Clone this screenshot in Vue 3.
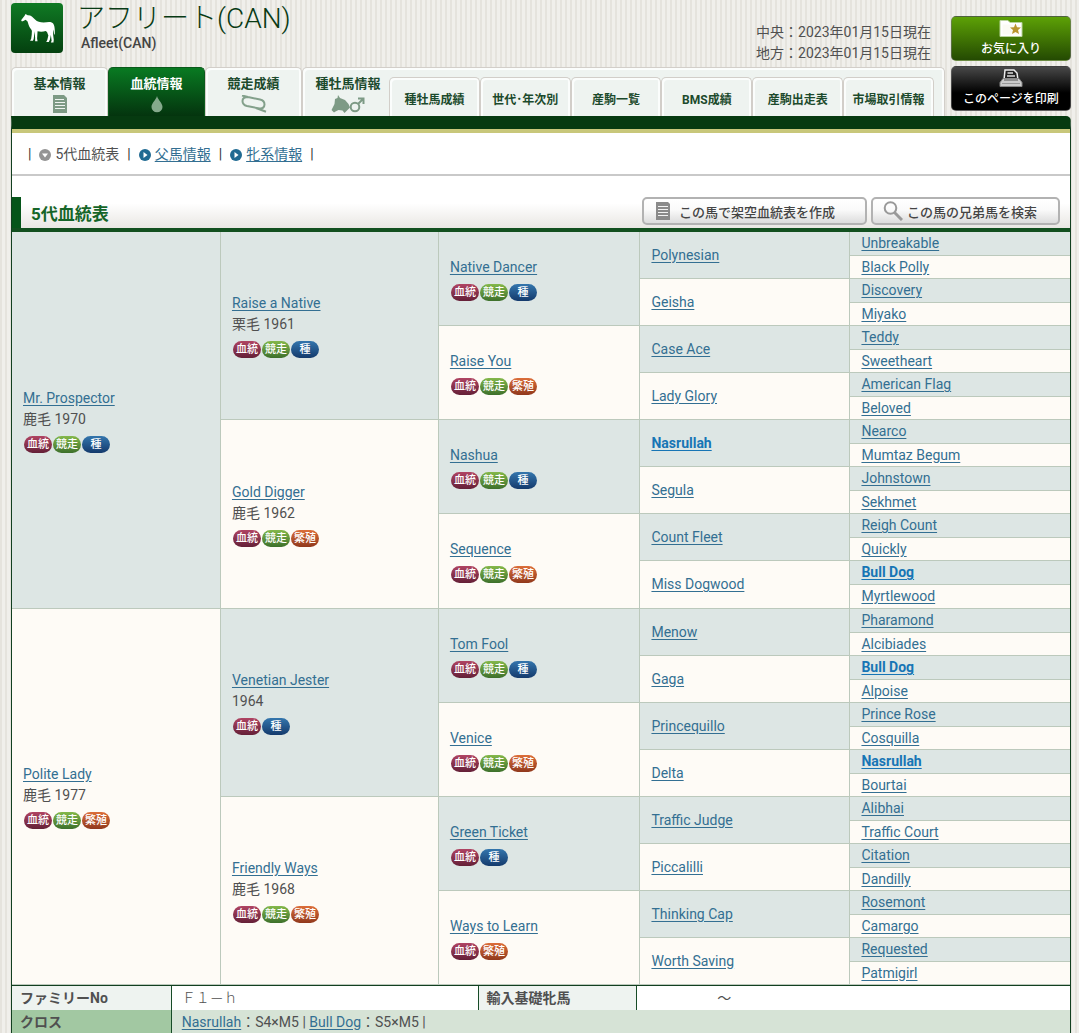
<script setup>
const mainTabs = [
  { label: '基本情報', icon: 'list' },
  { label: '血統情報', icon: 'drop', active: true },
  { label: '競走成績', icon: 'track' },
]
const subTabs = ['種牡馬成績', '世代･年次別', '産駒一覧', 'BMS成績', '産駒出走表', '市場取引情報']

const kinds = {
  b: { label: '血統', cls: 'blood' },
  r: { label: '競走', cls: 'race' },
  s: { label: '種', cls: 'stud' },
  m: { label: '繁殖', cls: 'mare' },
}

const generations = [
  [
    { name: 'Mr. Prospector', info: '鹿毛 1970', marks: 'brs' },
    { name: 'Polite Lady', info: '鹿毛 1977', marks: 'brm' },
  ],
  [
    { name: 'Raise a Native', info: '栗毛 1961', marks: 'brs' },
    { name: 'Gold Digger', info: '鹿毛 1962', marks: 'brm' },
    { name: 'Venetian Jester', info: '1964', marks: 'bs' },
    { name: 'Friendly Ways', info: '鹿毛 1968', marks: 'brm' },
  ],
  [
    { name: 'Native Dancer', marks: 'brs' },
    { name: 'Raise You', marks: 'brm' },
    { name: 'Nashua', marks: 'brs' },
    { name: 'Sequence', marks: 'brm' },
    { name: 'Tom Fool', marks: 'brs' },
    { name: 'Venice', marks: 'brm' },
    { name: 'Green Ticket', marks: 'bs' },
    { name: 'Ways to Learn', marks: 'bm' },
  ],
  [
    'Polynesian', 'Geisha', 'Case Ace', 'Lady Glory', 'Nasrullah', 'Segula', 'Count Fleet', 'Miss Dogwood',
    'Menow', 'Gaga', 'Princequillo', 'Delta', 'Traffic Judge', 'Piccalilli', 'Thinking Cap', 'Worth Saving',
  ].map((name) => ({ name })),
  [
    'Unbreakable', 'Black Polly', 'Discovery', 'Miyako', 'Teddy', 'Sweetheart', 'American Flag', 'Beloved',
    'Nearco', 'Mumtaz Begum', 'Johnstown', 'Sekhmet', 'Reigh Count', 'Quickly', 'Bull Dog', 'Myrtlewood',
    'Pharamond', 'Alcibiades', 'Bull Dog', 'Alpoise', 'Prince Rose', 'Cosquilla', 'Nasrullah', 'Bourtai',
    'Alibhai', 'Traffic Court', 'Citation', 'Dandilly', 'Rosemont', 'Camargo', 'Requested', 'Patmigirl',
  ].map((name) => ({ name })),
]
const crossed = ['Nasrullah', 'Bull Dog']

const rows = Array.from({ length: 32 }, (_, r) =>
  generations.flatMap((gen, g) => {
    const span = 32 / gen.length
    if (r % span) return []
    const i = r / span
    const horse = gen[i]
    return [{
      ...horse,
      span,
      key: g + '-' + i,
      sire: i % 2 === 0,
      cross: crossed.includes(horse.name),
      badges: [...(horse.marks || '')].map((m) => kinds[m]),
    }]
  })
)
</script>

<template>
  <div class="page">
    <header class="top">
      <div class="lead">
        <div class="title-row">
          <svg class="logo" viewBox="0 0 52 50" aria-hidden="true">
            <defs>
              <linearGradient id="logo-bg" x1="0" y1="0" x2="0" y2="1">
                <stop offset="0" stop-color="#107a24" />
                <stop offset="1" stop-color="#04400f" />
              </linearGradient>
            </defs>
            <rect width="52" height="50" rx="4" fill="url(#logo-bg)" />
            <path transform="translate(1 1.500) scale(.9)" fill="#fff" d="M15 10.500l-1 2-3.500 4.500c-.6 1.300.4 2 1.600 1.600l3-1.600 2 1.500c1 2 1.300 5 3 7.500 1 1.500 1.800 2 2 3.500l-.2 4-.6 4.500-1.200 2.300h3.200l.8-2 1-8.500.6 7 0 4h2.700l-.5-3 .5-8c3 .8 6.500.6 9-.3l1.500 1 1.500 4-1.200 5-1.200 2.300h2.900l1.300-3 1-5 .8 6.500-.9 2h3l.3-3-.8-6.500.2-5c.7 2 1 4.500.8 6.500l1-2c.2-6-.5-11.500-3.500-12.300-3-1-5.800 0-9 .1-4-.2-7-.7-9.500-3.300-2.500-2.500-4.500-5-8.200-4.800z" />
          </svg>
          <div class="names">
            <h1>アフリート(CAN)</h1>
            <p>Afleet(CAN)</p>
          </div>
          <div class="dates">
            <div>中央：2023年01月15日現在</div>
            <div>地方：2023年01月15日現在</div>
          </div>
        </div>

        <nav class="tabs">
          <a v-for="t in mainTabs" :key="t.label" href="#" class="tab main" :class="{ active: t.active }">
            <span>{{ t.label }}</span>
            <svg v-if="t.icon === 'list'" width="14" height="18" viewBox="0 0 14 18" aria-hidden="true">
              <path d="M0 0h11l3 3v15H0z" fill="#7d9a85" />
              <path d="M2 4.500h9M2 7.500h10M2 10.500h10M2 13.500h10" stroke="#eef3f0" stroke-width="1.200" />
            </svg>
            <svg v-else-if="t.icon === 'drop'" width="12" height="18" viewBox="0 0 12 18" aria-hidden="true">
              <path d="M6 1C5 5 .5 8 .5 12a5.500 5.200 0 0 0 11 0C11.500 8 7 5 6 1z" fill="#85aa8c" />
            </svg>
            <svg v-else width="26" height="18" viewBox="0 0 26 18" aria-hidden="true">
              <path d="M1 .5L7 2l12 2.500c3 .6 4.500 2.500 4.500 5s-2 4.500-5 4L6 11C3 10.300 1.500 8.500 1.500 6S3.500 2 7 2M15 13l10 3.800" fill="none" stroke="#83a08b" stroke-width="2" />
            </svg>
          </a>
          <div class="group">
            <a href="#" class="stallion">
              <span>種牡馬情報</span>
              <svg width="34" height="18" viewBox="0 0 34 18" aria-hidden="true">
                <path d="M7 0l2 3 5 2 3.500 4 1.500 3.500-5.500 5.500-2-2.500-4-.5-3 1.500L3 17.500.5 15l3-6 .5-5 2.500-1z" fill="#7d9a85" />
                <circle cx="24" cy="12" r="4.300" fill="none" stroke="#7d9a85" stroke-width="2" />
                <path d="M27 9l5-5M27 3.500h5.500V9" fill="none" stroke="#7d9a85" stroke-width="2" />
              </svg>
            </a>
            <div class="subs">
              <a v-for="s in subTabs" :key="s" href="#" class="tab sub">{{ s }}</a>
            </div>
          </div>
        </nav>
      </div>

      <div class="actions">
        <button type="button" class="fav">
          <svg width="24" height="18" viewBox="0 0 24 18" aria-hidden="true">
            <path d="M1 1.500h8l2 2h12v14H1z" fill="#fff" stroke="#b9d39c" />
            <path d="M3.500 5.500h17v10h-17z" fill="#fbfbf4" />
            <path d="M16.500 4.500l1.500 3.700 4 .3-3 2.600 1 3.900-3.500-2.100L13 15l1-3.900-3-2.600 4-.3z" fill="#b9952c" />
          </svg>
          <span>お気に入り</span>
        </button>
        <button type="button" class="print">
          <svg width="24" height="18" viewBox="0 0 24 18" aria-hidden="true">
            <path d="M6 1h9l3 3 1 7H5z" fill="#222" stroke="#eee" stroke-width="1.500" />
            <path d="M8.500 4H14M8 7h8" stroke="#ddd" stroke-width="1.500" />
            <path d="M4 9.500h16l3 4v4H1v-4z" fill="#ccc" stroke="#888" />
            <path d="M5 11h14" stroke="#555" />
            <path d="M3 14.500h18" stroke="#999" />
          </svg>
          <span>このページを印刷</span>
        </button>
      </div>
    </header>

    <main>
      <nav class="crumbs">
        <span class="bar">|</span>
        <span class="item">
          <svg width="12" height="12" viewBox="0 0 12 12" aria-hidden="true">
            <circle cx="6" cy="6" r="6" fill="#949494" /><path d="M3 4.500h6L6 8.500z" fill="#fff" />
          </svg>5代血統表</span>
        <span class="bar">|</span>
        <span class="item">
          <svg width="12" height="12" viewBox="0 0 12 12" aria-hidden="true">
            <circle cx="6" cy="6" r="6" fill="#206a92" /><path d="M4.500 3v6L8.500 6z" fill="#fff" />
          </svg><a href="#">父馬情報</a></span>
        <span class="bar">|</span>
        <span class="item">
          <svg width="12" height="12" viewBox="0 0 12 12" aria-hidden="true">
            <circle cx="6" cy="6" r="6" fill="#206a92" /><path d="M4.500 3v6L8.500 6z" fill="#fff" />
          </svg><a href="#">牝系情報</a></span>
        <span class="bar">|</span>
      </nav>

      <div class="heading">
        <h2>5代血統表</h2>
        <div class="tools">
          <button type="button" class="make">
            <svg width="14" height="18" viewBox="0 0 14 18" aria-hidden="true">
              <path d="M0 0h12l2 2v16H0z" fill="#8a8a8a" />
              <path d="M2 4.500h10M2 7.500h10M2 10.500h10M2 13.500h10" stroke="#f2f2f2" stroke-width="1.200" />
            </svg>
            この馬で架空血統表を作成
          </button>
          <button type="button" class="search">
            <svg width="20" height="20" viewBox="0 0 20 20" aria-hidden="true">
              <circle cx="7.500" cy="7" r="5.800" fill="none" stroke="#999" stroke-width="2" />
              <path d="M11.500 11.500l7.500 7.500" stroke="#999" stroke-width="3" />
            </svg>
            この馬の兄弟馬を検索
          </button>
        </div>
      </div>

      <table class="pedigree">
        <colgroup><col class="g1"><col class="g2"><col class="g3"><col class="g4"><col class="g5"></colgroup>
        <tbody>
          <tr v-for="(row, r) in rows" :key="r">
            <td v-for="h in row" :key="h.key" :rowspan="h.span" :class="{ sire: h.sire, last: h.span === 1 }">
              <a href="#" class="name" :class="{ cross: h.cross }">{{ h.name }}</a>
              <div v-if="h.info">{{ h.info }}</div>
              <div v-if="h.badges.length" class="badges">
                <a v-for="b in h.badges" :key="b.cls" href="#" class="badge" :class="b.cls">{{ b.label }}</a>
              </div>
            </td>
          </tr>
        </tbody>
      </table>

      <table class="summary">
        <colgroup><col class="s1"><col class="s2"><col class="s3"><col class="s4"></colgroup>
        <tbody>
          <tr>
            <th scope="row">ファミリーNo</th>
            <td class="thin">Ｆ１－ｈ</td>
            <th scope="row">輸入基礎牝馬</th>
            <td class="range">～</td>
          </tr>
          <tr class="green">
            <th scope="row">クロス</th>
            <td colspan="3"><a href="#">Nasrullah</a>：S4×M5 | <a href="#">Bull Dog</a>：S5×M5 |</td>
          </tr>
        </tbody>
      </table>
    </main>
  </div>
</template>

<style>
body {
  margin: 0;
  background: repeating-linear-gradient(90deg, #e5e3dd 0 2px, #f0efeb 2px 5px);
}
</style>

<style scoped>
.page {
  padding: 0 8px 0 11px;
  font: 14px/21px Roboto, "Noto Sans CJK JP", sans-serif;
  color: #505050;
}
.page * { box-sizing: border-box; }
a { color: #336f92; text-underline-offset: 2px; }
button { font-family: inherit; cursor: pointer; }

.top { display: flex; gap: 6px; }
.lead { flex: 1; min-width: 0; }
.title-row { display: flex; height: 67px; }
.logo { width: 52px; height: 50px; margin-top: 3px; }
.names { flex: 1; padding-left: 14px; }
h1 { margin: 0; font-size: 28px; line-height: 38px; font-weight: 300; color: #083a14; }
.names p { margin: 0; padding-left: 4px; line-height: 10px; font-weight: 500; color: #444; }
.dates { padding: 22px 14px 0 0; }

.tabs { display: flex; height: 49px; }
.tab, .group {
  border: 1px solid #d2cec9;
  border-bottom: 0;
  border-radius: 5px 5px 0 0;
  background: #eef3f0;
  box-shadow: inset 2px 2px #fbfdfc, inset -2px 0 #fbfdfc;
}
.tab, .stallion { color: #1c4a2c; font-weight: 700; text-decoration: none; text-align: center; }
.main, .stallion { display: flex; flex-direction: column; align-items: center; font-size: 13px; line-height: 18px; gap: 2px; padding-top: 7px; }
.main { width: 97px; }
.main.active { color: #fff; background: linear-gradient(#097a22, #04340e); border-color: #0b5a1c; box-shadow: none; }
.group { flex: 1; display: flex; padding-right: 10px; }
.stallion { width: 86px; padding-left: 4px; }
.subs { flex: 1; display: flex; padding-top: 9px; }
.sub { flex: 1; font-size: 12px; line-height: 44px; white-space: nowrap; }

.actions { width: 120px; padding-top: 16px; display: flex; flex-direction: column; gap: 5px; }
.actions button {
  height: 45px; padding: 2px 0 0; border: 1px solid #77777788; border-radius: 5px;
  display: flex; flex-direction: column; align-items: center; gap: 2px;
  color: #fff; font-size: 12px; line-height: 20px; font-weight: 500;
}
.actions .fav { background: linear-gradient(#5da106, #244a02); }
.actions .print { background: linear-gradient(#484848, #000 60%); }

main { border: 1px solid #123f20; border-width: 0 1px; background: #fff; border-top: 13px solid #063a10; border-radius: 0 5px 0 0; }
.crumbs {
  display: flex; align-items: center; gap: 8px; height: 47px; padding: 2px 15px 0 16px;
  border-top: 4px solid #c8c77a; border-bottom: 2px solid #c9c9c9;
}
.item { display: flex; align-items: center; gap: 4px; }
.bar { color: #333; }

.heading {
  display: flex; justify-content: space-between; height: 35px; margin-top: 21px;
  border-bottom: 4px solid #12501f; background: linear-gradient(#fff, #fff 20%, #e9e7e3);
}
h2 { margin: 0; padding: 3px 0 0 10px; border-left: 9px solid #055519; font-size: 17px; line-height: 28px; color: #156528; }
.tools { display: flex; gap: 4px; padding-right: 10px; }
.tools button {
  display: flex; align-items: center; height: 28px; padding: 0 8px 0 12px; border: 2px solid #b2b2b2; border-radius: 5px;
  background: linear-gradient(#fff, #fafafa 45%, #dcdcdc); color: #444; font-size: 13px; font-weight: 500; white-space: nowrap;
}
.tools .make { width: 225px; gap: 9px; }
.tools .search { width: 189px; gap: 4px; padding-left: 10px; }

table { width: 100%; border-spacing: 0; table-layout: fixed; }
.pedigree { border-bottom: 1px solid #123f20; }
.pedigree tr { height: 23px; }
.pedigree tr:nth-child(odd), .pedigree tr:nth-child(16) { height: 24px; }
.pedigree td { padding: 0 0 0 11px; border: 1px solid #bcc9bc; border-width: 0 1px 1px 0; background: #fefbf6; vertical-align: middle; }
.pedigree td.sire { background: #dde6e4; }
.pedigree td.last { border-right: 0; }
.g1 { width: 19.75%; }
.g2 { width: 20.6%; }
.g3 { width: 19.05%; }
.g4 { width: 19.85%; }
.g5 { width: 20.75%; }
.name.cross { font-weight: 700; color: #1775b5; }
.badges { display: flex; gap: 1px; padding: 6px 0 0 1px; }
.badge {
  width: 28px; height: 17px; border-radius: 9px; text-align: center; text-decoration: none;
  color: #fff; font-size: 11px; line-height: 18px; font-weight: 500;
}
.blood { background: linear-gradient(#b04463, #642037); }
.race { background: linear-gradient(#84b84b, #3d702b); }
.stud { background: linear-gradient(#3476ad, #143a6c); }
.mare { background: linear-gradient(#dc6e3a, #90381c); }

.summary th, .summary td { height: 24px; padding: 0 0 0 10px; text-align: left; }
.summary th { background: #eef3f0; border-right: 1px solid #174c27; font-weight: 700; padding-left: 8px; }
.summary td + th { border-left: 1px solid #174c27; }
.summary .green th { background: #a2c8a2; }
.summary .green td { background: #d6e3d6; }
.summary .thin { font-weight: 300; }
.summary .range { padding-left: 80px; }
.s1 { width: 15.1%; }
.s2 { width: 28.9%; }
.s3 { width: 15.1%; }
.s4 { width: 40.9%; }
</style>
